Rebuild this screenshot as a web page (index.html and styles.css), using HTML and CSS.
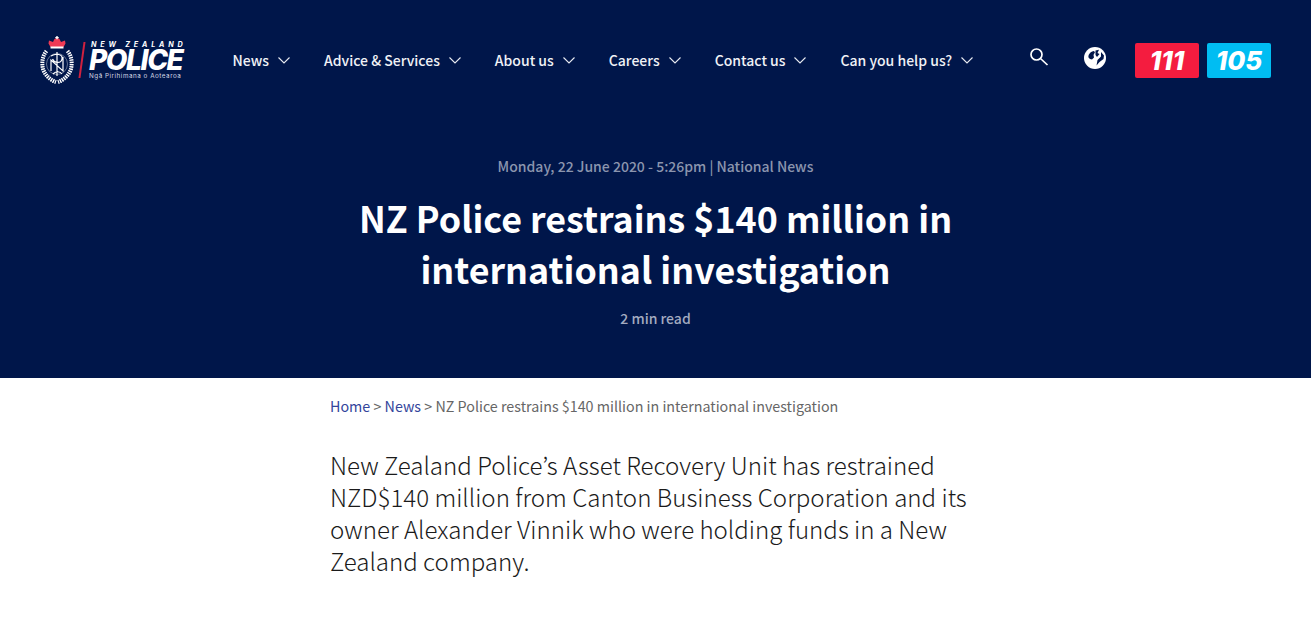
FILE: index.html
```html
<!DOCTYPE html>
<html lang="en">
<head>
<meta charset="utf-8">
<title>NZ Police restrains $140 million in international investigation</title>
<link rel="stylesheet" href="styles.css">
</head>
<body>
<header class="hero">
  <div class="topbar">
    <a class="logo" href="#">
      <svg class="crest" viewBox="0 0 34 48" width="34" height="48" aria-hidden="true">
        <path d="M9 4.500 L13 6 L14.500 3 L17 1.800 L19.500 3 L21 6 L25 4.500 L25.500 7.500 L23.500 11 H10.500 L8.500 7.500 Z" fill="#ee3a55"/>
        <rect x="10.500" y="10.500" width="13" height="2" fill="#fff"/>
        <path d="M16.300 0 h1.400 v1 h1 v1.200 h-1 v1 h-1.400 v-1 h-1 v-1.200 h1 Z" fill="#fff"/>
        <g fill="none" stroke="#fff">
          <path d="M6.500 15 C2.500 20 1.500 26 3 33 C5 39 10 44 16 46" stroke-width="4" stroke-dasharray="1.500 .8"/>
          <path d="M27.500 15 C31.500 20 32.500 26 31 33 C29 39 24 44 18 46" stroke-width="4" stroke-dasharray="1.500 .8"/>
          <circle cx="17" cy="28" r="10.500" stroke-width=".7" opacity=".55"/>
          <path d="M17 16 V40 M11 20 C16 17 23 18 22 23 C21 28 14 27 12.500 23 M11 35 L11 24 L23 35 L23 21 M13 38 C16 35 20 35 22 38" stroke-width="1.200"/>
        </g>
      </svg>
      <span class="logo-rule"></span>
      <span class="wordmark">
        <span class="wm-top">NEW ZEALAND</span>
        <span class="wm-main">POLICE</span>
        <span class="wm-sub">Ngā Pirihimana o Aotearoa</span>
      </span>
    </a>
    <nav class="nav">
      <a class="nav-item" href="#">News<svg class="chev" viewBox="0 0 12 7"><path d="M.5.5 6 6 11.500.5"/></svg></a>
      <a class="nav-item" href="#">Advice &amp; Services<svg class="chev" viewBox="0 0 12 7"><path d="M.5.5 6 6 11.500.5"/></svg></a>
      <a class="nav-item" href="#">About us<svg class="chev" viewBox="0 0 12 7"><path d="M.5.5 6 6 11.500.5"/></svg></a>
      <a class="nav-item" href="#">Careers<svg class="chev" viewBox="0 0 12 7"><path d="M.5.5 6 6 11.500.5"/></svg></a>
      <a class="nav-item" href="#">Contact us<svg class="chev" viewBox="0 0 12 7"><path d="M.5.5 6 6 11.500.5"/></svg></a>
      <a class="nav-item" href="#">Can you help us?<svg class="chev" viewBox="0 0 12 7"><path d="M.5.5 6 6 11.500.5"/></svg></a>
    </nav>
    <div class="tools">
      <svg class="search" viewBox="0 0 20 20" width="20" height="20" aria-hidden="true">
        <circle cx="7.500" cy="7.500" r="5.500"/><path d="M11.500 11.500 18.500 18"/>
      </svg>
      <svg class="globe" viewBox="0 0 22 22" width="22" height="22" aria-hidden="true">
        <circle cx="11" cy="11" r="11" fill="#fff"/>
        <path d="M4.500 10.500 C4 8 6 5 9.500 4 L11 5 L9.500 8 L10 10.500 L8 12.500 L6 12 Z" fill="#00164a"/>
        <path d="M11.500 3.500 L15 2.800 L13.500 6 L15.500 7 L13 10 L11.500 8 Z M17 5 L20 8.500 L19.500 12 L15.500 15 L12.500 18.500 L13.500 13 L17 9.500 Z" fill="#00164a"/>
      </svg>
      <div class="numbers">
        <a class="num num-red" href="#">111</a>
        <a class="num num-blue" href="#">105</a>
      </div>
    </div>
  </div>
  <div class="hero-copy">
    <p class="meta">Monday, 22 June 2020 - 5:26pm | National News</p>
    <h1>NZ Police restrains $140 million in<br>international investigation</h1>
    <p class="read">2 min read</p>
  </div>
</header>
<main class="content">
  <p class="crumbs"><a href="#">Home</a> &gt; <a href="#">News</a> &gt; NZ Police restrains $140 million in international investigation</p>
  <p class="lead">New Zealand Police’s Asset Recovery Unit has restrained NZD$140 million from Canton Business Corporation and its owner Alexander Vinnik who were holding funds in a New Zealand company.</p>
</main>
</body>
</html>
```
FILE: styles.css
```css
* { box-sizing: border-box; }
html, body { margin: 0; height: 100%; overflow: hidden; }
body {
  background: #fff;
  color: #222;
  font-family: "Noto Sans CJK JP", "Noto Sans", sans-serif;
}
a { text-decoration: none; color: inherit; }
p { margin: 0; }

.hero { background: #00164a; height: 378px; color: #fff; }
.topbar {
  display: flex;
  align-items: center;
  height: 120px;
  padding: 0 40px;
}
.logo { display: flex; align-items: center; width: 192.500px; flex: none; }
.crest { width: 34px; height: 48px; flex: none; }
.logo-rule {
  width: 1.500px; height: 36px; margin: 0 7px 0 6.500px;
  background: #d0213f; transform: skewX(-8deg);
}
.wordmark { display: flex; flex-direction: column; font-family: "Inter", sans-serif; color: #fff; }
.wm-top { font-size: 7.200px; font-weight: 700; font-style: italic; letter-spacing: 3.800px; line-height: 9px; margin-left: 2px; white-space: nowrap; }
.wm-main { font-size: 28px; font-weight: 800; font-style: italic; line-height: 22px; letter-spacing: -1.400px; }
.wm-sub { font-size: 6.300px; line-height: 8px; letter-spacing: .52px; color: #d5d9e4; margin-top: 1px; white-space: nowrap; }

.nav { display: flex; gap: 34px; flex: none; }
.nav-item {
  display: flex; align-items: center; gap: 9px;
  font-size: 14px; font-weight: 500;
  color: #f0f2f6; line-height: 20px;
}
.chev { width: 12px; height: 7px; fill: none; stroke: #e8ebf2; stroke-width: 1.100; }

.tools { display: flex; align-items: center; margin-left: auto; }
.search { fill: none; stroke: #fff; stroke-width: 1.700; margin-right: 35px; margin-top: -6px; }
.globe { margin-right: 29px; margin-top: -5px; }
.numbers { display: flex; gap: 8px; }
.num {
  display: block; width: 64px; height: 35px; border-radius: 2px;
  font-family: "Inter", sans-serif; font-style: italic; font-weight: 800;
  font-size: 26px; line-height: 35px; text-align: center; color: #fff;
}
.num-red { background: #f41c3f; }
.num-blue { background: #00bdf2; }

.hero-copy { text-align: center; padding-top: 34px; }
.meta { font-size: 14px; line-height: 24px; font-weight: 500; color: #8b95ae; }
h1 {
  margin: 14px 0 0;
  font-size: 35.800px; line-height: 51px; font-weight: 700;
  color: #fff;
}
.read { margin-top: 12px; font-size: 14px; line-height: 24px; font-weight: 500; color: #a3abc0; }

.content { width: 652px; margin-left: 330px; }
.crumbs {
  padding-top: 16px;
  font-size: 14.300px; line-height: 24px; color: #666;
}
.crumbs a { color: #33459b; }
.lead {
  margin-top: 31px;
  font-size: 24.080px; line-height: 32px; font-weight: 300; color: #1a1a1a;
}
```
